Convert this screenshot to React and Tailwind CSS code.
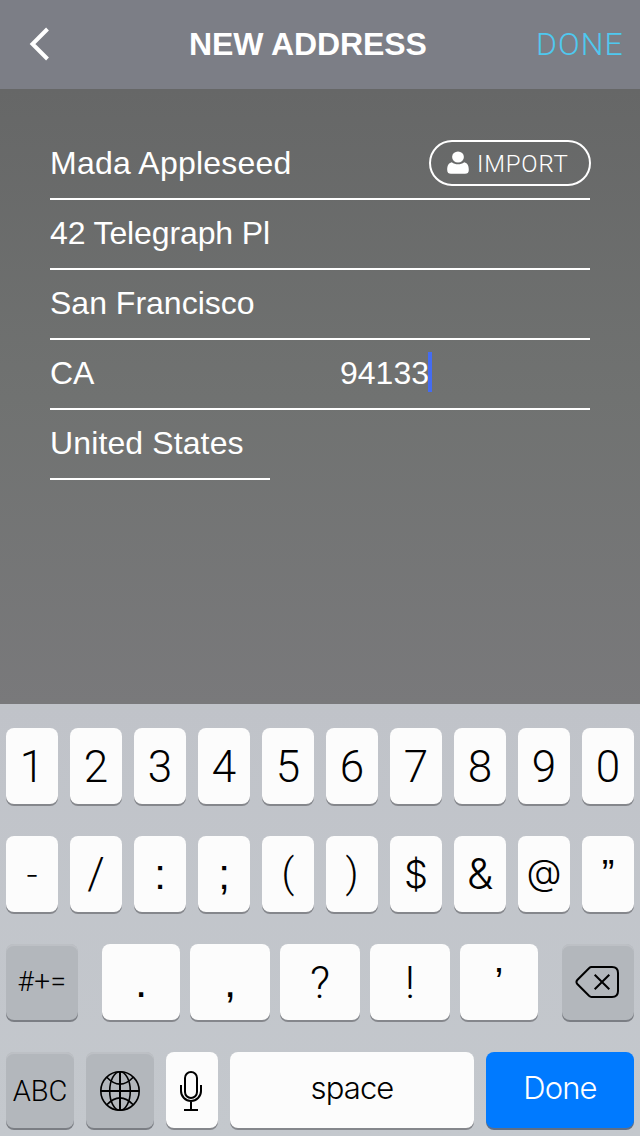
import React from 'react';

const LIGHT = "font-['Roboto','Liberation_Sans',sans-serif] font-light";
const INTER = "font-['Inter','Liberation_Sans',sans-serif]";
const SANS = "font-['Liberation_Sans',Arial,sans-serif]";

const tones = {
  white: 'bg-[#fcfcfc] text-black shadow-[0_2px_0_#85878c]',
  gray: 'bg-[#b3b7bc] text-black shadow-[0_2px_0_#7b7e84,inset_0_2px_0_#bdc0c5]',
  blue: 'bg-[#007aff] text-white shadow-[0_2px_0_#5f6f86]',
};

function Key({ width = 'w-[52px]', tone = 'white', label, text = 'text-[44px] pt-[2px]', children, name }) {
  return (
    <button
      type="button"
      aria-label={name}
      className={`${width} ${tones[tone]} flex h-[76px] shrink-0 items-center justify-center rounded-[8px] ${LIGHT}`}
    >
      {children ?? <span className={`${text} block whitespace-nowrap leading-[76px]`}>{label}</span>}
    </button>
  );
}

function Field({ children, width = 'w-[540px]' }) {
  return (
    <div className={`${width} flex h-[70px] items-start border-b-2 border-white`}>
      {children}
    </div>
  );
}

function Value({ children, className = '' }) {
  return <span className={`block whitespace-nowrap pt-[14px] text-[32px] leading-[38px] ${className}`}>{children}</span>;
}

function PersonIcon() {
  return (
    <svg width="24" height="24" viewBox="0 0 24 24" fill="white">
      <ellipse cx="12" cy="6" rx="5.9" ry="5.5" />
      <path d="M5.8 11.2 C7.6 12.6 9.8 13.2 12 13.2 S16.4 12.6 18.2 11.2 C21.8 12 22.8 15 22.8 19 C22.8 21.8 21.4 22.8 19 22.8 H5 C2.6 22.8 1.2 21.8 1.2 19 C1.2 15 2.2 12 5.8 11.2 Z" />
    </svg>
  );
}

function GlobeIcon() {
  return (
    <svg className="mt-[2px]" width="42" height="42" viewBox="0 0 42 42" fill="none" stroke="black" strokeWidth="1.6">
      <circle cx="21" cy="21" r="19.2" />
      <ellipse cx="21" cy="21" rx="10.3" ry="19.2" />
      <path d="M7.8 7.2 Q21 21 34.2 7.2 M7.8 34.8 Q21 21 34.2 34.8" />
      <path d="M21 2 V40 M2 21 H40" strokeWidth="2" />
    </svg>
  );
}

function MicIcon() {
  return (
    <svg className="mt-[2px]" width="24" height="42" viewBox="0 0 24 42" fill="none" stroke="black" strokeWidth="2">
      <rect x="5" y="2" width="12" height="26" rx="6" />
      <path d="M1 15 V21 A10 10 0 0 0 21 21 V15 M11 31 V40 M4 40 H18" />
    </svg>
  );
}

function DeleteIcon() {
  return (
    <svg width="46" height="34" viewBox="0 0 46 34" fill="none" stroke="black" strokeWidth="2">
      <path d="M16.5 2 H37 Q43 2 43 8 V26 Q43 32 37 32 H16.5 Q15.3 32 14 30.8 L2.3 19 Q0.6 17 2.3 15 L14 3.2 Q15.3 2 16.5 2 Z" />
      <path d="M19.7 9.7 L34.3 24.3 M34.3 9.7 L19.7 24.3" />
    </svg>
  );
}

const symbols = [
  { label: '-', text: `${INTER} text-[30px]` },
  { label: '/', text: 'text-[44px]' },
  { label: ':', text: `${SANS} text-[42px] pt-[2px]` },
  { label: ';', text: `${SANS} text-[42px] pt-[2px]` },
  { label: '(', text: 'text-[40px]' },
  { label: ')', text: 'text-[40px]' },
  { label: '$', text: `${INTER} text-[38px]` },
  { label: '&', text: `${INTER} text-[42px]` },
  { label: '@', text: `${INTER} text-[36px] pb-[4px]` },
  { label: '”', text: `${SANS} text-[38px]` },
];

export default function App() {
  return (
    <div className="flex h-[1136px] w-[640px] flex-col overflow-hidden bg-[#78787a] font-['Liberation_Sans',Arial,sans-serif] text-white">
      <header className="flex h-[89px] shrink-0 items-start bg-[#7c7e86]">
        <div className="w-[189px] pl-[29px] pt-[27px]">
          <svg width="22" height="34" viewBox="0 0 22 34" fill="none" stroke="white" strokeWidth="4">
            <path d="M18.5 2 L3.5 17 L18.5 32" />
          </svg>
        </div>
        <h1 className="w-[347px] whitespace-nowrap pt-[25px] text-[32px] font-bold leading-[38px] tracking-[-0.1px]">NEW ADDRESS</h1>
        <button type="button" className={`whitespace-nowrap pt-[25px] text-[32px] leading-[38px] tracking-[1px] text-[#4fc8ef] ${LIGHT}`}>DONE</button>
      </header>

      <main className="flex h-[615px] shrink-0 flex-col bg-linear-to-b from-[#666767] via-[#707271] via-50% to-[#79797b] pl-[50px] pt-[41px]">
        <Field>
          <Value className="w-[379px] tracking-[0.23px]">Mada Appleseed</Value>
          <button type="button" className="-mr-px mt-[10px] flex h-[46px] w-[162px] shrink-0 items-center rounded-[23px] border-2 border-white pl-[15px]">
            <PersonIcon />
            <span className={`pl-[7px] pt-px text-[24px] leading-[30px] tracking-[0.8px] ${LIGHT}`}>IMPORT</span>
          </button>
        </Field>
        <Field><Value className="tracking-[-0.12px]">42 Telegraph Pl</Value></Field>
        <Field><Value>San Francisco</Value></Field>
        <Field>
          <Value className="w-[290px]">CA</Value>
          <Value className="w-[88px]">94133</Value>
          <span className="mt-[12px] h-[40px] w-[4px] bg-[#446cf2]" />
        </Field>
        <Field width="w-[220px]"><Value className="tracking-[0.12px]">United States</Value></Field>
      </main>

      <section className="flex h-[432px] shrink-0 flex-col gap-[32px] bg-linear-to-b from-[#c0c3c9] to-[#c4c8cd] px-[6px] pt-[24px]">
        <div className="flex gap-3">
          {['1', '2', '3', '4', '5', '6', '7', '8', '9', '0'].map((k) => <Key key={k} label={k} />)}
        </div>
        <div className="flex gap-3">
          {symbols.map((k) => <Key key={k.label} {...k} />)}
        </div>
        <div className="flex justify-between">
          <Key width="w-[72px]" tone="gray" label="#+=" text="text-[28px] tracking-[0.5px]" />
          <div className="flex gap-[10px]">
            <Key width="w-[78px]" label="." text={`${SANS} text-[44px]`} />
            <Key width="w-[80px]" label="," text={`${SANS} text-[44px]`} />
            <Key width="w-[80px]" label="?" />
            <Key width="w-[80px]" label="!" />
            <Key width="w-[78px]" label="’" text={`${SANS} text-[40px]`} />
          </div>
          <Key width="w-[72px]" tone="gray" name="Delete"><DeleteIcon /></Key>
        </div>
        <div className="flex gap-3">
          <Key width="w-[68px]" tone="gray" label="ABC" text="text-[29px] pt-[2px]" />
          <Key width="w-[68px]" tone="gray" name="Next keyboard"><GlobeIcon /></Key>
          <Key name="Dictate"><MicIcon /></Key>
          <Key width="w-[244px]" label="space" text={`${INTER} text-[31px] tracking-[-0.9px] pb-[4px]`} />
          <Key width="w-[148px]" tone="blue" label="Done" text={`${INTER} text-[31px] tracking-[-0.9px] pb-[4px]`} />
        </div>
      </section>
    </div>
  );
}
